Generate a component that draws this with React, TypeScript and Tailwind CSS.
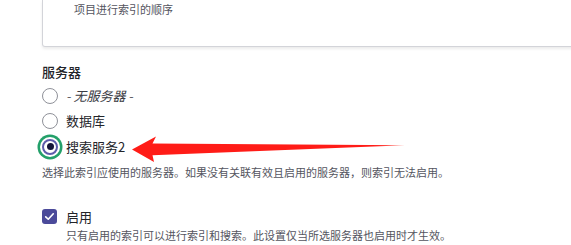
import React from 'react';

const radios = [
  { label: '- 无服务器 -', italic: true, checked: false },
  { label: '数据库', italic: false, checked: false },
  { label: '搜索服务2', italic: false, checked: true },
];

const App: React.FC = () => {
  return (
    <div className="relative w-[571px] h-[245px] overflow-hidden bg-white text-[#232429] font-['Noto_Sans_CJK_SC','Noto_Sans',sans-serif]">
      <div className="pl-[42px]">
        {/* Previous field card (cut off at the top) */}
        <div className="w-[545px] h-[47px] border-x border-b border-[#d3d4d9] rounded-b-[3px] shadow-[0_2px_3px_rgba(0,0,0,0.08)] pl-[31px] pt-[1px]">
          <p className="text-[11px] leading-[16px] text-[#545560]">项目进行索引的顺序</p>
        </div>

        {/* Server */}
        <div className="mt-[16px] text-[13px] leading-[18px] font-medium">服务器</div>
        <div className="mt-[2px]">
          {radios.map((r) => (
            <label key={r.label} className="flex items-center h-[25.5px] gap-[8px]">
              {r.checked ? (
                <span className="w-[16px] h-[16px] rounded-full border-[2px] border-[#5d5cab] bg-white flex items-center justify-center shadow-[0_0_0_2px_#ffffff,0_0_0_4.5px_#23a06a]">
                  <span className="w-[7px] h-[7px] rounded-full bg-[#14143a]" />
                </span>
              ) : (
                <span className="w-[16px] h-[16px] rounded-full border border-[#8f9199] bg-white" />
              )}
              <span className={`text-[13px] leading-[18px] ${r.italic ? 'italic text-[#3b3c44]' : ''}`}>
                {r.label}
              </span>
            </label>
          ))}
        </div>
        <p className="mt-[4px] text-[11px] leading-[16px] text-[#545560]">
          选择此索引应使用的服务器。如果没有关联有效且启用的服务器，则索引无法启用。
        </p>

        {/* Enabled */}
        <label className="mt-[27px] flex items-center h-[20px] gap-[9px]">
          <span className="w-[15px] h-[15px] rounded-[3px] bg-[#4b4a9a] flex items-center justify-center">
            <svg viewBox="0 0 16 16" className="w-[11px] h-[11px]">
              <path d="M2.5 8.5 L6.2 12 L13.5 4" fill="none" stroke="#ffffff" strokeWidth="2.4" strokeLinecap="round" strokeLinejoin="round" />
            </svg>
          </span>
          <span className="text-[13px] leading-[18px]">启用</span>
        </label>
        <p className="pl-[24px] text-[11px] leading-[16px] text-[#545560]">
          只有启用的索引可以进行索引和搜索。此设置仅当所选服务器也启用时才生效。
        </p>
      </div>

      {/* Annotation arrow */}
      <svg className="absolute inset-0 pointer-events-none" width="571" height="245" viewBox="0 0 571 245">
        <defs>
          <linearGradient id="tail" x1="132" y1="0" x2="405" y2="0" gradientUnits="userSpaceOnUse">
            <stop offset="0" stopColor="#ff1c17" />
            <stop offset="0.9" stopColor="#ff1c17" />
            <stop offset="1" stopColor="#ff6a60" />
          </linearGradient>
        </defs>
        <path
          d="M132 149.5 L156 136.5 L152.5 143.6 L405 145.3 L152.5 155.2 L154 162 Z"
          fill="url(#tail)"
        />
      </svg>
    </div>
  );
};

export default App;
